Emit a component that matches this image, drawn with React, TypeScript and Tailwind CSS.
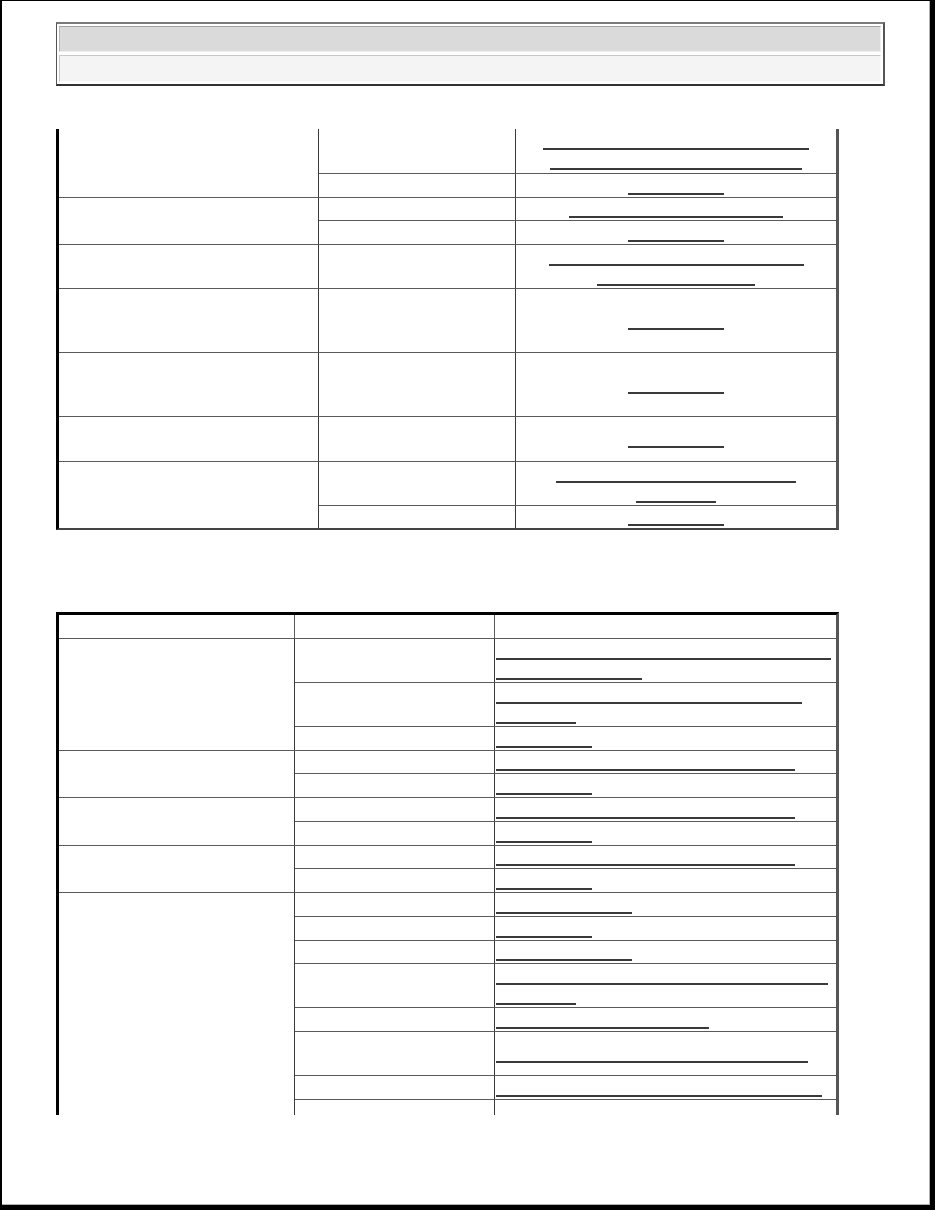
import React from 'react';

type Sub = { h: number; lines: number[] };
type Group = { subs: Sub[] };

// first table: centred underlines in the last column
const topGroups: Group[] = [
  { subs: [{ h: 44, lines: [266, 252] }, { h: 24, lines: [96] }] },
  { subs: [{ h: 22, lines: [214] }, { h: 24, lines: [96] }] },
  { subs: [{ h: 43, lines: [255, 158] }] },
  { subs: [{ h: 63, lines: [96] }] },
  { subs: [{ h: 63, lines: [96] }] },
  { subs: [{ h: 44, lines: [96] }] },
  { subs: [{ h: 43, lines: [240, 80] }, { h: 23, lines: [96] }] },
];

// second table: left aligned underlines
const bottomGroups: Group[] = [
  { subs: [{ h: 43, lines: [335, 146] }, { h: 44, lines: [306, 80] }, { h: 24, lines: [96] }] },
  { subs: [{ h: 22, lines: [299] }, { h: 24, lines: [96] }] },
  { subs: [{ h: 23, lines: [299] }, { h: 24, lines: [96] }] },
  { subs: [{ h: 22, lines: [299] }, { h: 24, lines: [96] }] },
  {
    subs: [
      { h: 23, lines: [136] },
      { h: 24, lines: [96] },
      { h: 23, lines: [136] },
      { h: 44, lines: [332, 80] },
      { h: 24, lines: [213] },
      { h: 44, lines: [312] },
      { h: 24, lines: [326] },
      { h: 16, lines: [] },
    ],
  },
];

const Line: React.FC<{ w: number; center?: boolean }> = ({ w, center }) => (
  <div className={`h-[20px] flex items-end pb-[1px] ${center ? 'justify-center' : 'justify-start pl-[1px]'}`}>
    <span className="block h-[2px] bg-[#3a3a3a]" style={{ width: w }} />
  </div>
);

const Table: React.FC<{
  groups: Group[];
  col1: string;
  col2: string;
  center?: boolean;
}> = ({ groups, col1, col2, center }) => (
  <>
    {groups.map((g, gi) => (
      <div key={gi} className={`flex ${gi > 0 ? 'border-t border-[#5a5a5a]' : ''}`}>
        <div className={`${col1} shrink-0 border-r border-[#3a3a3a]`} />
        <div className="flex-1 flex flex-col">
          {g.subs.map((s, si) => (
            <div
              key={si}
              className={`flex ${si > 0 ? 'border-t border-[#5a5a5a]' : ''}`}
              style={{ height: s.h }}
            >
              <div className={`${col2} shrink-0 border-r border-[#3a3a3a]`} />
              <div className="flex-1 flex flex-col justify-center">
                {s.lines.map((w, li) => (
                  <Line key={li} w={w} center={center} />
                ))}
              </div>
            </div>
          ))}
        </div>
      </div>
    ))}
  </>
);

const App: React.FC = () => {
  return (
    <div className="w-[935px] h-[1210px] overflow-hidden bg-white border-l-2 border-t border-r-[5px] border-b-[5px] border-black font-['Liberation_Sans',Arial,sans-serif]">
      <div className="h-full border-r border-b border-[#b0b0b0] pl-[54px] pt-[21px] flex flex-col">
        {/* Title box */}
        <div className="w-[829px] h-[64px] border-t-2 border-l border-r-2 border-b-2 border-t-[#7a7a7a] border-l-[#555] border-r-[#555] border-b-[#333] p-[2px] flex flex-col gap-[3px]">
          <div className="h-[27px] bg-[#dadada] border-t border-l border-t-[#a0a0a0] border-l-[#b5b5b5] border-r border-b border-r-[#eee] border-b-[#eee]" />
          <div className="h-[28px] bg-[#f4f4f4] border-t border-l border-t-[#c8c8c8] border-l-[#c8c8c8] border-r border-b border-r-[#fafafa] border-b-[#fafafa]" />
        </div>

        {/* First table, continued from previous page */}
        <div className="mt-[43px] w-[783px] border-l-[3px] border-l-black border-r-[3px] border-r-[#555] border-b-2 border-b-[#444]">
          <Table groups={topGroups} col1="w-[260px]" col2="w-[197px]" center />
        </div>

        {/* Second table */}
        <div className="mt-[82px] w-[783px] border-t-[3px] border-t-black border-l-[3px] border-l-black border-r-[3px] border-r-[#555]">
          <div className="flex h-[23px]">
            <div className="w-[236px] shrink-0 border-r border-[#5a5a5a]" />
            <div className="w-[200px] shrink-0 border-r border-[#5a5a5a]" />
            <div className="flex-1" />
          </div>
          <div className="border-t border-[#5a5a5a]">
            <Table groups={bottomGroups} col1="w-[236px]" col2="w-[200px]" />
          </div>
        </div>
      </div>
    </div>
  );
};

export default App;
